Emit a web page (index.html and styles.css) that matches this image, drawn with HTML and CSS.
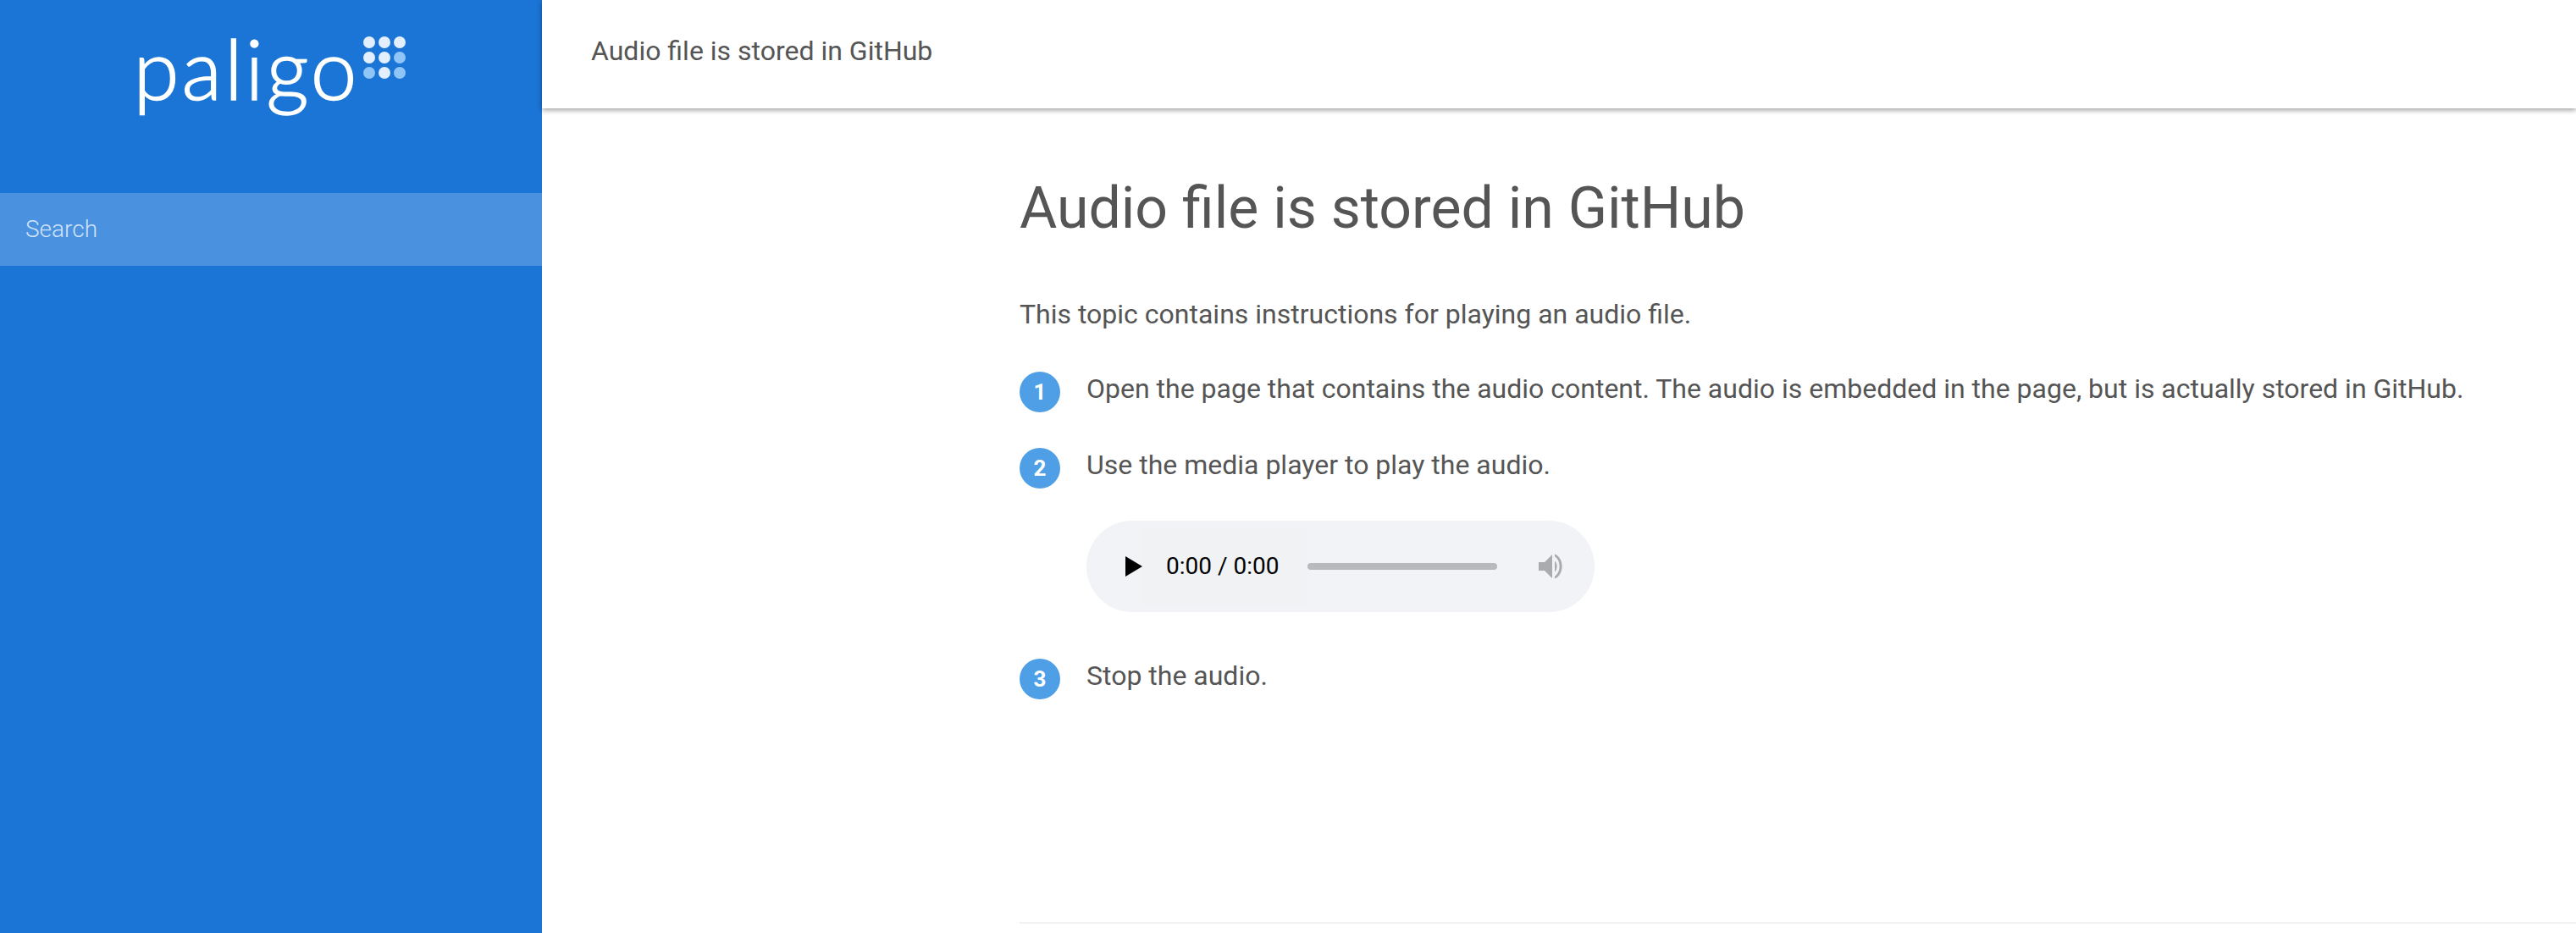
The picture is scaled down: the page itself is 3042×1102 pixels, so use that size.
FILE: index.html
```html
<!DOCTYPE html>
<html lang="en">
<head>
  <meta charset="UTF-8" />
  <title>Audio file is stored in GitHub</title>
  <link rel="stylesheet" href="styles.css">
</head>
<body>
  <div class="container">
    <aside class="sidebar">
      <div class="logo">
        <span class="logo-text">paligo</span>
        <svg class="logo-dots" width="50" height="50" viewBox="0 0 50 50" aria-hidden="true">
          <circle cx="7" cy="7" r="7" fill="#e3effc"/>
          <circle cx="25" cy="7" r="7" fill="#e3effc"/>
          <circle cx="43" cy="7" r="7" fill="#e3effc"/>
          <circle cx="7" cy="25" r="7" fill="#e3effc"/>
          <circle cx="25" cy="25" r="7" fill="#e3effc"/>
          <circle cx="43" cy="25" r="7" fill="#90c5f7"/>
          <circle cx="7" cy="43" r="7" fill="#90c5f7"/>
          <circle cx="25" cy="43" r="7" fill="#e3effc"/>
          <circle cx="43" cy="43" r="7" fill="#90c5f7"/>
        </svg>
      </div>
      <div class="search">Search</div>
    </aside>

    <div class="main">
      <header class="topbar">Audio file is stored in GitHub</header>
      <div class="content">
        <h1 class="title">Audio file is stored in GitHub</h1>
        <p class="intro">This topic contains instructions for playing an audio file.</p>
        <ol class="steps">
          <li class="step">
            <span class="num">1</span>
            <div class="step-body">Open the page that contains the audio content. The audio is embedded in the page, but is actually stored in GitHub.</div>
          </li>
          <li class="step">
            <span class="num">2</span>
            <div class="step-body">
              Use the media player to play the audio.
              <div class="player">
                <svg class="play" width="20" height="24" viewBox="0 0 20 24" aria-hidden="true">
                  <path d="M0 0 L20 12 L0 24 Z" fill="#000"/>
                </svg>
                <div class="time">0:00 / 0:00</div>
                <div class="track"></div>
                <svg class="volume" width="32" height="32" viewBox="0 0 32 32" aria-hidden="true">
                  <path d="M1 11 H8 L17 2 V30 L8 21 H1 Z" fill="#a9abae"/>
                  <path d="M20 9.5 C23.5 12.5 23.5 19.5 20 22.5 Z" fill="#a9abae"/>
                  <path d="M20 1.5 C31.5 6 31.5 26 20 30.5 V27.5 C27.5 23.5 27.5 8.5 20 4.5 Z" fill="#a9abae"/>
                </svg>
              </div>
            </div>
          </li>
          <li class="step">
            <span class="num">3</span>
            <div class="step-body">Stop the audio.</div>
          </li>
        </ol>
        <div class="footer-line"></div>
      </div>
    </div>
  </div>
</body>
</html>
```

FILE: styles.css
```css
* {
  box-sizing: border-box;
  margin: 0;
  padding: 0;
}

body {
  font-family: Roboto, 'Liberation Sans', sans-serif;
  background-color: #fff;
  color: #555;
  height: 1102px;
  overflow: hidden;
}

.container {
  display: flex;
  height: 100%;
}

/* Sidebar */
.sidebar {
  width: 640px;
  flex-shrink: 0;
  background-color: #1a75d6;
}

.logo {
  display: flex;
  align-items: flex-start;
  justify-content: center;
  height: 228px;
  padding: 43px 4px 0 0;
}

.logo-text {
  margin-top: -7px;
  font-family: Lato, sans-serif;
  font-weight: 300;
  font-size: 98px;
  letter-spacing: 3px;
  line-height: 88px;
  color: #fff;
  -webkit-text-stroke: 1.5px #fff;
}

.logo-dots {
  margin-left: 4px;
}

.search {
  height: 86px;
  padding-left: 30px;
  background-color: #4a91df;
  color: #cfe3f9;
  font-size: 28px;
  font-weight: 300;
  line-height: 86px;
}

/* Main area */
.main {
  flex: 1;
  min-width: 0;
}

.topbar {
  height: 128px;
  padding-left: 58px;
  font-size: 32px;
  line-height: 120px;
  box-shadow: 0 2px 6px rgba(0, 0, 0, 0.4);
}

.content {
  padding: 78px 0 0 564px;
}

.title {
  font-size: 68px;
  font-weight: 400;
  line-height: 80px;
  margin-bottom: 63px;
}

.intro {
  font-size: 32px;
  line-height: 44px;
  margin-bottom: 44px;
}

.steps {
  list-style: none;
}

.step {
  display: flex;
  gap: 31px;
  margin-bottom: 40px;
  font-size: 32px;
  line-height: 44px;
}

.num {
  width: 48px;
  height: 48px;
  flex-shrink: 0;
  margin-top: 2px;
  border-radius: 50%;
  background-color: #4f9fe6;
  color: #fff;
  font-size: 26px;
  font-weight: 700;
  line-height: 48px;
  text-align: center;
}

.step-body {
  white-space: nowrap;
}

/* Audio player */
.player {
  display: flex;
  align-items: center;
  width: 600px;
  height: 108px;
  margin-top: 44px;
  margin-bottom: 13px;
  padding-left: 46px;
  border-radius: 54px;
  background-color: #f1f3f6;
}

.play {
  flex-shrink: 0;
}

.time {
  width: 195px;
  height: 90px;
  padding-left: 28px;
  background-color: #f0f2f4;
  color: #000;
  font-size: 28px;
  line-height: 90px;
  white-space: nowrap;
}

.track {
  width: 224px;
  height: 8px;
  border-radius: 4px;
  background-color: #b8b9bc;
}

.volume {
  margin-left: 48px;
}

.footer-line {
  height: 2px;
  margin-top: 263px;
  background-color: #f2f2f2;
}
```
